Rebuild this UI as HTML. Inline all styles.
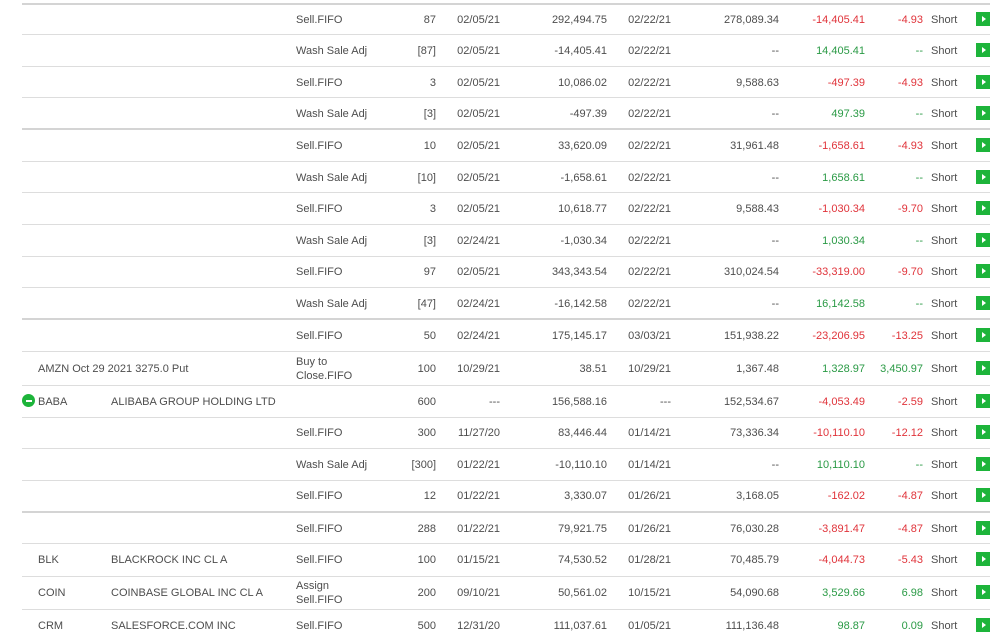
<!DOCTYPE html>
<html><head><meta charset="utf-8"><style>
body{margin:0;width:1000px;height:638px;overflow:hidden;background:#fff;font-family:"Liberation Sans",sans-serif;font-size:11px;color:#4d4d4d;position:relative}
.l{position:absolute;left:22px;width:968px;height:1px;background:#ddd}
.t{height:2px;background:#d4d4d4}
.r{position:absolute;left:0;width:1000px;height:0}
.r span{position:absolute;top:-6px;line-height:14px;white-space:nowrap}
.a{text-align:right}
.g{color:#2a9a45}.n{color:#e0333a}
.ic{position:absolute;left:976px;top:-7px;width:14px;height:14px;background:#1db43a}
.ic:after{content:"";position:absolute;left:5.5px;top:4px;border-left:4px solid #fff;border-top:3px solid transparent;border-bottom:3px solid transparent}
.r span.two{top:-13px}
.min{position:absolute;left:22px;top:-7px;width:13px;height:13px;border-radius:50%;background:#1db43a}
.min:after{content:"";position:absolute;left:3.5px;top:6px;width:6px;height:1.5px;background:#fff}
</style></head><body>
<div class="l t" style="top:3px"></div><div class="l" style="top:34px"></div><div class="l" style="top:66px"></div><div class="l" style="top:97px"></div><div class="l t" style="top:128px"></div><div class="l" style="top:161px"></div><div class="l" style="top:192px"></div><div class="l" style="top:224px"></div><div class="l" style="top:256px"></div><div class="l" style="top:287px"></div><div class="l t" style="top:318px"></div><div class="l" style="top:351px"></div><div class="l" style="top:385px"></div><div class="l" style="top:417px"></div><div class="l" style="top:448px"></div><div class="l" style="top:480px"></div><div class="l t" style="top:511px"></div><div class="l" style="top:543px"></div><div class="l" style="top:576px"></div><div class="l" style="top:609px"></div>
<div id="rows"></div>
<script>
var D=[
[19,"","","Sell.FIFO","87","02/05/21","292,494.75","02/22/21","278,089.34","-14,405.41","-4.93"],
[50,"","","Wash Sale Adj","[87]","02/05/21","-14,405.41","02/22/21","--","14,405.41","--"],
[82,"","","Sell.FIFO","3","02/05/21","10,086.02","02/22/21","9,588.63","-497.39","-4.93"],
[113,"","","Wash Sale Adj","[3]","02/05/21","-497.39","02/22/21","--","497.39","--"],
[145,"","","Sell.FIFO","10","02/05/21","33,620.09","02/22/21","31,961.48","-1,658.61","-4.93"],
[177,"","","Wash Sale Adj","[10]","02/05/21","-1,658.61","02/22/21","--","1,658.61","--"],
[208,"","","Sell.FIFO","3","02/05/21","10,618.77","02/22/21","9,588.43","-1,030.34","-9.70"],
[240,"","","Wash Sale Adj","[3]","02/24/21","-1,030.34","02/22/21","--","1,030.34","--"],
[271,"","","Sell.FIFO","97","02/05/21","343,343.54","02/22/21","310,024.54","-33,319.00","-9.70"],
[303,"","","Wash Sale Adj","[47]","02/24/21","-16,142.58","02/22/21","--","16,142.58","--"],
[335,"","","Sell.FIFO","50","02/24/21","175,145.17","03/03/21","151,938.22","-23,206.95","-13.25"],
[368,"AMZN Oct 29 2021 3275.0 Put","","Buy to<br>Close.FIFO","100","10/29/21","38.51","10/29/21","1,367.48","1,328.97","3,450.97"],
[401,"BABA","ALIBABA GROUP HOLDING LTD","","600","---","156,588.16","---","152,534.67","-4,053.49","-2.59"],
[432,"","","Sell.FIFO","300","11/27/20","83,446.44","01/14/21","73,336.34","-10,110.10","-12.12"],
[464,"","","Wash Sale Adj","[300]","01/22/21","-10,110.10","01/14/21","--","10,110.10","--"],
[495,"","","Sell.FIFO","12","01/22/21","3,330.07","01/26/21","3,168.05","-162.02","-4.87"],
[528,"","","Sell.FIFO","288","01/22/21","79,921.75","01/26/21","76,030.28","-3,891.47","-4.87"],
[559,"BLK","BLACKROCK INC CL A","Sell.FIFO","100","01/15/21","74,530.52","01/28/21","70,485.79","-4,044.73","-5.43"],
[592,"COIN","COINBASE GLOBAL INC CL A","Assign<br>Sell.FIFO","200","09/10/21","50,561.02","10/15/21","54,090.68","3,529.66","6.98"],
[625,"CRM","SALESFORCE.COM INC","Sell.FIFO","500","12/31/20","111,037.61","01/05/21","111,136.48","98.87","0.09"]];
function c(v){return v=="--"?"g":(v[0]=="-"?"n":"g")}
var h="";
D.forEach(function(r){
h+='<div class="r" style="top:'+r[0]+'px">';
if(r[1]=="BABA")h+='<i class="min"></i>';
h+='<span style="left:38px">'+r[1]+'</span><span style="left:111px">'+r[2]+'</span>';
h+='<span style="left:296px"'+(r[3].indexOf("<br>")>0?' class="two"':'')+'>'+r[3]+'</span>';
h+='<span class="a" style="right:564px">'+r[4]+'</span>';
h+='<span class="a" style="right:500px">'+r[5]+'</span>';
h+='<span class="a" style="right:393px">'+r[6]+'</span>';
h+='<span class="a" style="right:329px">'+r[7]+'</span>';
h+='<span class="a" style="right:221px">'+r[8]+'</span>';
h+='<span class="a '+c(r[9])+'" style="right:135px">'+r[9]+'</span>';
h+='<span class="a '+c(r[10])+'" style="right:77px">'+r[10]+'</span>';
h+='<span style="left:931px">Short</span><i class="ic"></i></div>';
});
document.getElementById("rows").innerHTML=h;
</script>
</body></html>
